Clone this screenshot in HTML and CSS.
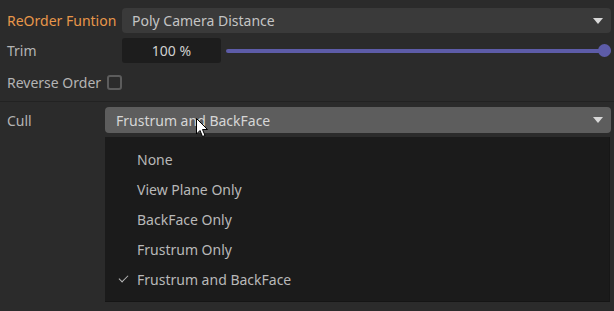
FILE: index.html
```html
<!DOCTYPE html>
<html lang="en">
<head>
    <meta charset="UTF-8">
    <title>Poly Camera Distance</title>
    <link rel="stylesheet" href="styles.css">
</head>
<body>
    <div class="panel">
        <div class="row row-top">
            <label class="label label-active">ReOrder Funtion</label>
            <div class="dropdown">
                <span>Poly Camera Distance</span>
                <span class="arrow"></span>
            </div>
        </div>
        <div class="row row-trim">
            <label class="label">Trim</label>
            <div class="number">100 %</div>
            <div class="slider">
                <div class="track"></div>
                <div class="knob"></div>
            </div>
        </div>
        <div class="row row-check">
            <label class="label-inline">Reverse Order</label>
            <span class="checkbox"></span>
        </div>
        <div class="separator"></div>
        <div class="row row-cull">
            <label class="label cull-label">Cull</label>
            <div class="dropdown dropdown-open">
                <span>Frustrum and BackFace</span>
                <span class="arrow"></span>
                <svg class="cursor" width="13" height="20" viewBox="0 0 13 20">
                    <path d="M0.5 0.5 L0.5 16 L4 12.5 L6.5 18.5 L9 17.5 L6.5 11.5 L11.5 11.5 Z" fill="#fff" stroke="#000" stroke-width="1"/>
                </svg>
            </div>
        </div>
        <ul class="menu">
            <li>None</li>
            <li>View Plane Only</li>
            <li>BackFace Only</li>
            <li>Frustrum Only</li>
            <li class="checked">Frustrum and BackFace</li>
        </ul>
    </div>
</body>
</html>
```

FILE: styles.css
```css
* {
    margin: 0;
    padding: 0;
    box-sizing: border-box;
}
body {
    background-color: #2b2b2b;
    color: #b4b4b4;
    font-family: 'Noto Sans', 'Open Sans', sans-serif;
    font-size: 14px;
    width: 614px;
    height: 311px;
    overflow: hidden;
}
.panel {
    padding-top: 8px;
}
.row {
    display: flex;
    align-items: center;
    height: 25px;
}
.label {
    width: 122px;
    padding-left: 7px;
    white-space: nowrap;
}
.label-active {
    color: #e8974a;
}
.dropdown {
    position: relative;
    flex: 1;
    height: 100%;
    margin-right: 3px;
    display: flex;
    align-items: center;
    justify-content: space-between;
    padding: 0 8px 0 10px;
    background-color: #3a3a3a;
    color: #c4c4c4;
    border-radius: 4px;
}
.arrow {
    width: 0;
    height: 0;
    border-left: 5px solid transparent;
    border-right: 5px solid transparent;
    border-top: 6px solid #d8d8d8;
}
.row-trim {
    margin-top: 5px;
}
.number {
    width: 99px;
    height: 100%;
    display: flex;
    align-items: center;
    justify-content: center;
    background-color: #1d1d1d;
    color: #d0d0d0;
    border-radius: 3px;
}
.slider {
    position: relative;
    flex: 1;
    height: 13px;
    margin-left: 5px;
    margin-right: 3px;
    display: flex;
    align-items: center;
}
.track {
    width: 100%;
    height: 4px;
    background-color: #5d5ca8;
    border-radius: 2px;
}
.knob {
    position: absolute;
    right: 0;
    top: 0;
    width: 13px;
    height: 13px;
    border-radius: 50%;
    background-color: #5d5ca8;
}
.row-check {
    height: 38px;
    padding-left: 7px;
    gap: 6px;
}
.checkbox {
    width: 15px;
    height: 15px;
    border: 2px solid #5c5c5c;
    border-radius: 3px;
}
.separator {
    height: 1px;
    background-color: #222;
}
.row-cull {
    margin-top: 5px;
    height: 26px;
}
.cull-label {
    width: 105px;
}
.dropdown-open {
    background-color: #5d5d5d;
    color: #d6d6d6;
    padding-left: 11px;
}
.cursor {
    position: absolute;
    left: 91px;
    top: 11px;
}
.menu {
    list-style: none;
    margin: 4px 0 0 105px;
    width: 505px;
    height: 165px;
    padding-top: 8px;
    background-color: #1b1b1b;
    border-right: 1px solid #171717;
    border-bottom: 1px solid #151515;
}
.menu li {
    position: relative;
    height: 30px;
    line-height: 30px;
    padding-left: 32px;
    color: #b8b8b8;
}
.menu li.checked::before {
    content: "";
    position: absolute;
    left: 14px;
    top: 10px;
    width: 8px;
    height: 4px;
    border-left: 1.5px solid #b8b8b8;
    border-bottom: 1.5px solid #b8b8b8;
    transform: rotate(-45deg);
}
```
